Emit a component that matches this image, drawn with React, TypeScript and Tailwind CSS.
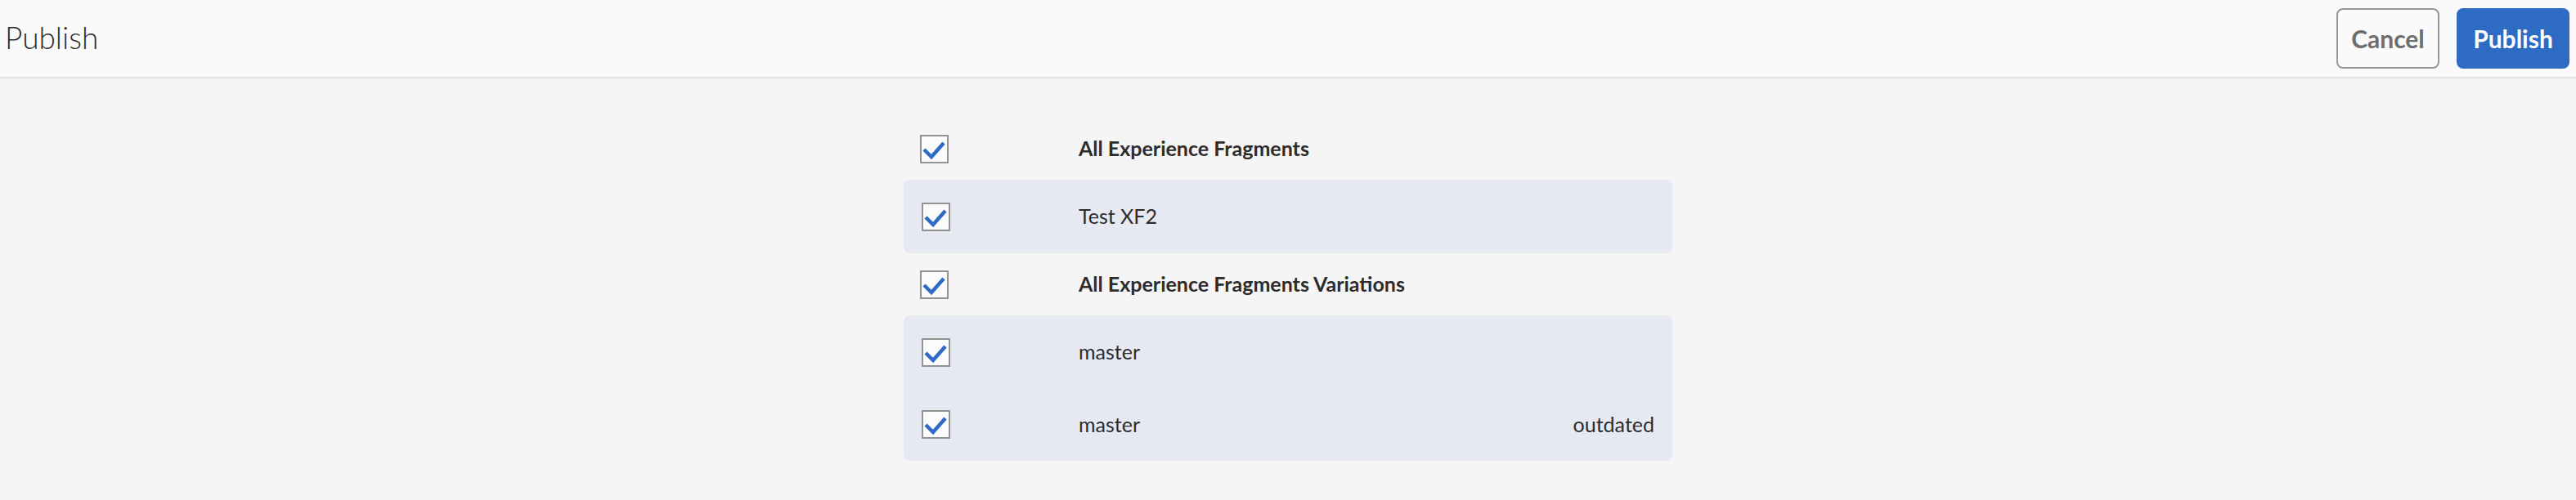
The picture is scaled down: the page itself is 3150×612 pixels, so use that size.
import React from 'react';

const font = { fontFamily: 'Lato, "Open Sans", sans-serif' };

const Check: React.FC<{ inGroup?: boolean }> = ({ inGroup }) => (
  <div className={`w-[214px] shrink-0 ${inGroup ? 'pl-[22px]' : 'pl-[20px]'}`}>
    <div className="w-[35px] h-[35px] border-2 border-[#929292] bg-[#fbfbfb] flex items-center justify-center">
      <svg width="31" height="31" viewBox="0 0 31 31">
        <polyline points="3,16 12,25 27,8" fill="none" stroke="#2d6bc4" strokeWidth="4.5" />
      </svg>
    </div>
  </div>
);

const HeaderRow: React.FC<{ label: string }> = ({ label }) => (
  <div className="flex items-center h-[76px]">
    <Check />
    <span className="text-[25px] font-bold text-[#2c2c2c]">{label}</span>
  </div>
);

const ItemRow: React.FC<{ label: string; status?: string; first?: boolean }> = ({ label, status, first }) => (
  <div className={`flex items-center h-[88px] pr-[22px] ${first ? '' : 'border-t border-[#e3e6ef]'}`}>
    <Check inGroup />
    <span className="text-[25px] text-[#2c2c2c]">{label}</span>
    {status && <span className="ml-auto text-[25px] text-[#2c2c2c]">{status}</span>}
  </div>
);

export default function App() {
  const groups = [
    { title: 'All Experience Fragments', items: [{ label: 'Test XF2' }] },
    {
      title: 'All Experience Fragments Variations',
      items: [{ label: 'master' }, { label: 'master', status: 'outdated' }],
    },
  ];

  return (
    <div className="min-h-[612px] bg-[#f5f5f5]" style={font}>
      {/* Top bar */}
      <div className="h-[96px] bg-[#fafafa] border-b-2 border-[#e3e3e3] flex items-center justify-between pl-[6px] pr-[8px]">
        <h1 className="text-[37px] font-light text-[#2c2c2c] -mt-[2px]">Publish</h1>
        <div className="flex items-center gap-[21px]">
          <button className="w-[126px] h-[74px] rounded-[8px] border-2 border-[#979797] bg-[#fafafa] text-[30px] font-bold text-[#6e6e6e]">
            Cancel
          </button>
          <button className="w-[138px] h-[74px] rounded-[8px] bg-[#2d6bc4] text-[30px] font-bold text-white">
            Publish
          </button>
        </div>
      </div>

      {/* Selection list */}
      <div className="w-[940px] mx-auto pt-[48px]">
        {groups.map((g, i) => (
          <div key={i}>
            <HeaderRow label={g.title} />
            <div className="rounded-[8px] bg-[#e7e9f2] py-px">
              {g.items.map((it, j) => (
                <ItemRow key={j} label={it.label} status={it.status} first={j === 0} />
              ))}
            </div>
          </div>
        ))}
      </div>
    </div>
  );
}
